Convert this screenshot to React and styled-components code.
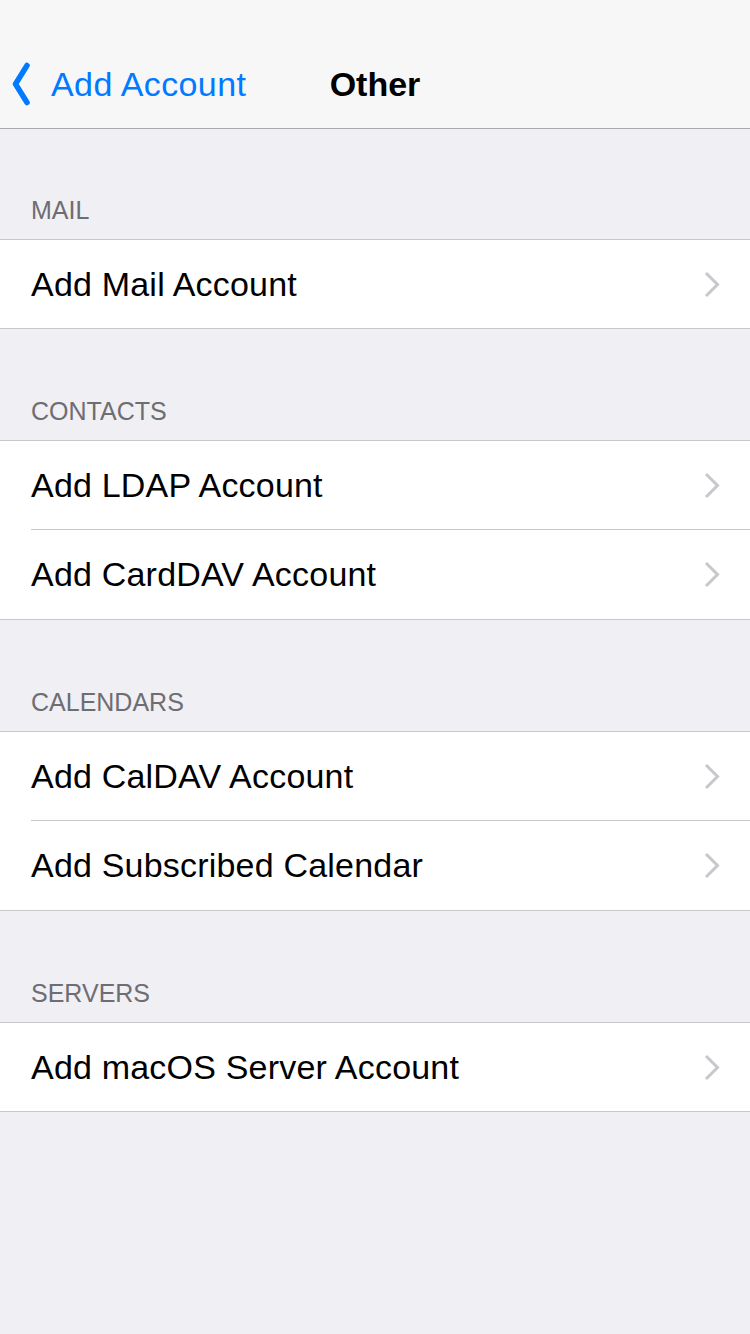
import React from 'react'
import styled, { createGlobalStyle } from 'styled-components'

const Global = createGlobalStyle`
html, body {
    margin: 0;
    padding: 0;
    background: #efeff4;
}
body {
    font-family: 'Liberation Sans', Arial, sans-serif;
    -webkit-font-smoothing: antialiased;
}
`

const Screen = styled.div`
width: 750px;
min-height: 1334px;
background: #efeff4;
display: flex;
flex-direction: column;
`

const NavBar = styled.header`
height: 88px;
padding-top: 40px;
background: #f7f7f8;
border-bottom: 1px solid #a9a9ad;
display: grid;
grid-template-columns: 1fr auto 1fr;
align-items: center;
`

const BackButton = styled.button`
justify-self: start;
display: flex;
align-items: center;
gap: 21px;
padding: 0 0 0 12px;
border: none;
background: none;
color: #007aff;
font-family: inherit;
font-size: 34px;
letter-spacing: 0.4px;
cursor: pointer;

svg {
    display: block;
}
`

const Title = styled.h1`
margin: 0;
font-size: 34px;
font-weight: 700;
color: #000;
`

const SectionHeader = styled.div`
height: 110px;
box-sizing: border-box;
display: flex;
align-items: flex-end;
padding: 0 31px 14px;
font-size: 25px;
line-height: 30px;
color: #6d6d72;
text-transform: uppercase;

section + section & {
    height: 111px;
}
`

const List = styled.ul`
margin: 0;
padding: 0;
list-style: none;
background: #fff;
border-top: 1px solid #c8c7cc;
border-bottom: 1px solid #c8c7cc;
`

const Row = styled.li`
padding-left: 31px;
display: flex;
cursor: pointer;

& + & > div {
    height: 89px;
    border-top: 1px solid #c8c7cc;
}
`

const RowInner = styled.div`
flex: 1;
height: 88px;
display: flex;
align-items: center;
justify-content: space-between;
padding-right: 30px;
font-size: 34px;
letter-spacing: 0.2px;
color: #000;
`

const Chevron = () => (
    <svg width="16" height="27" viewBox="0 0 16 27">
        <path d="M2 2 L13.5 13.5 L2 25" fill="none" stroke="#c7c7cc" strokeWidth="3" />
    </svg>
)

const sections = [
    { title: 'Mail', items: ['Add Mail Account'] },
    { title: 'Contacts', items: ['Add LDAP Account', 'Add CardDAV Account'] },
    { title: 'Calendars', items: ['Add CalDAV Account', 'Add Subscribed Calendar'] },
    { title: 'Servers', items: ['Add macOS Server Account'] },
]

const App = () => {
    return (
        <Screen>
            <Global />
            <NavBar>
                <BackButton>
                    <svg width="18" height="44" viewBox="0 0 18 44">
                        <path d="M15 3.5 L3.5 22 L15 40.5" fill="none" stroke="#007aff" strokeWidth="5.5" strokeLinecap="round" strokeLinejoin="round" />
                    </svg>
                    Add Account
                </BackButton>
                <Title>Other</Title>
                <div />
            </NavBar>
            {sections.map(s => (
                <section key={s.title}>
                    <SectionHeader>{s.title}</SectionHeader>
                    <List>
                        {s.items.map(item => (
                            <Row key={item}>
                                <RowInner>
                                    {item}
                                    <Chevron />
                                </RowInner>
                            </Row>
                        ))}
                    </List>
                </section>
            ))}
        </Screen>
    )
}

export default App
